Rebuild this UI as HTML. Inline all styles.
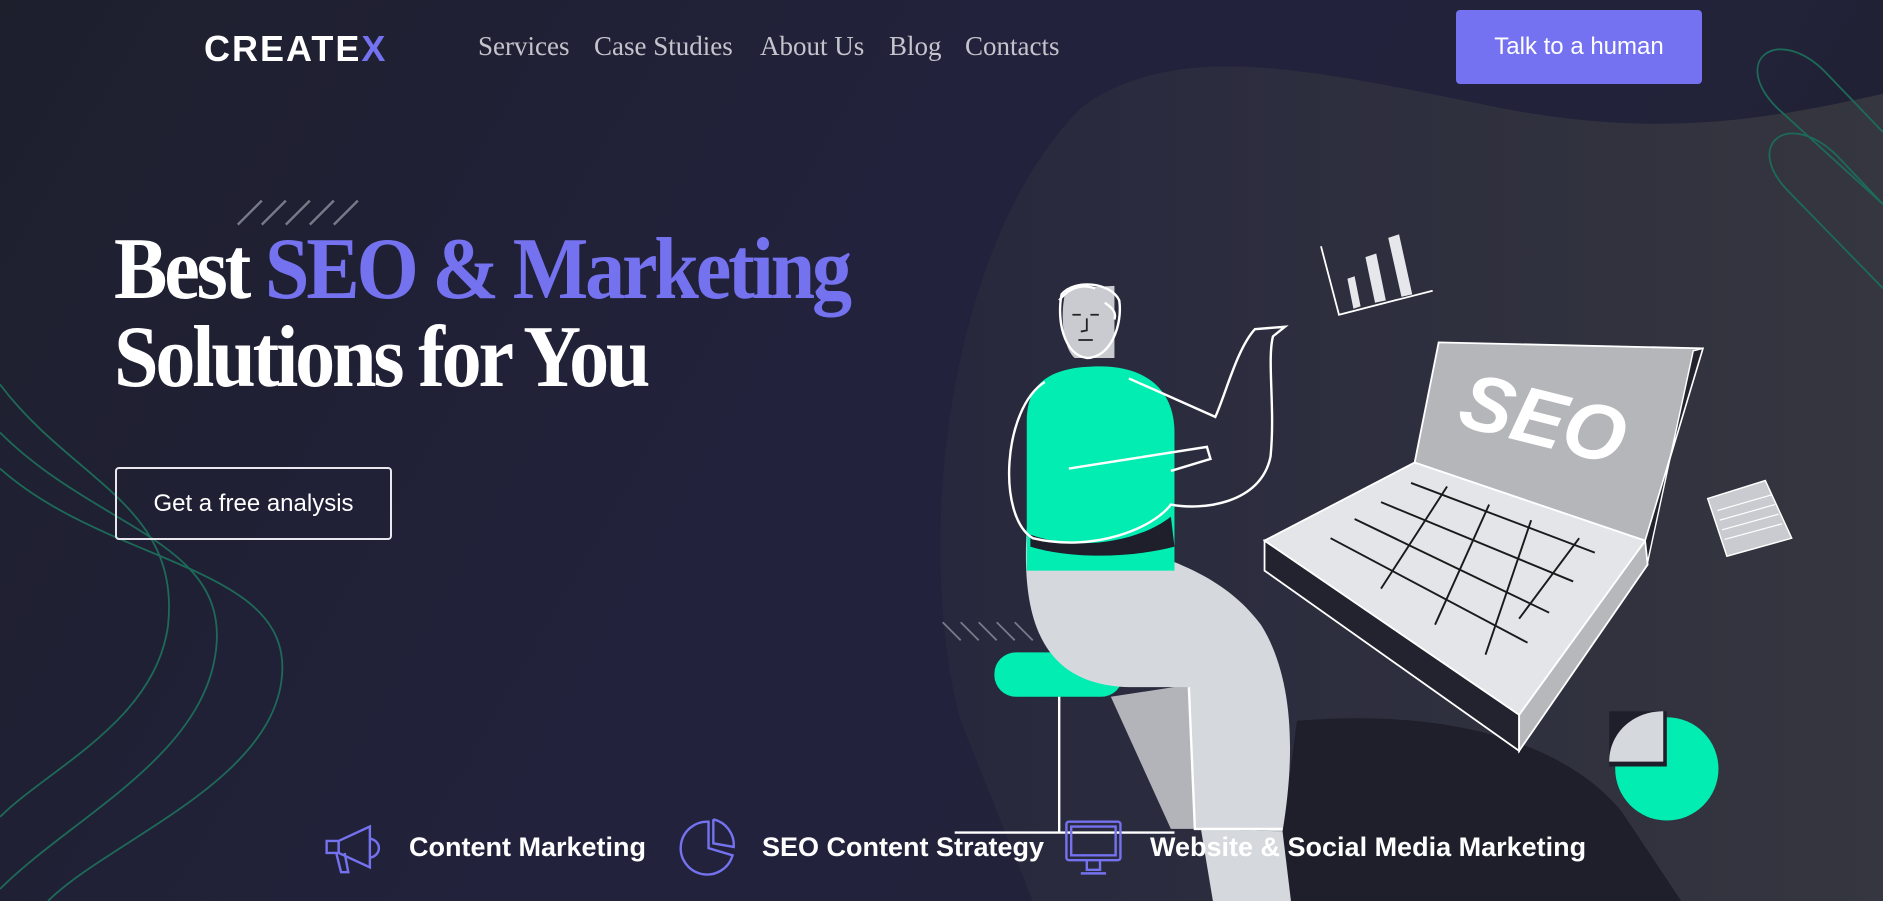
<!DOCTYPE html>
<html><head><meta charset="utf-8"><style>
*{margin:0;padding:0;box-sizing:border-box}
body{width:1883px;height:901px;overflow:hidden;background:linear-gradient(120deg,#1e1f2d 0%,#22223d 45%,#22223a 70%,#1f1f2c 100%);position:relative;font-family:"Liberation Sans",sans-serif}
svg.bg{position:absolute;left:0;top:0}
.abs{position:absolute;white-space:nowrap}
.logo{left:204px;top:28px;font-weight:bold;font-size:36px;color:#fff;letter-spacing:2px}
.nav{top:31px;font-family:"Liberation Serif",serif;font-size:27px;color:#c4c4cc}
.talk{left:1456px;top:10px;width:246px;height:74px;background:#7472f0;border-radius:4px;color:#fff;font-size:24px;display:flex;align-items:center;justify-content:center}
.h{left:114px;font-family:"Liberation Serif",serif;font-weight:bold;font-size:88px;color:#fff;letter-spacing:-3.5px;line-height:1;transform:scaleX(0.91);transform-origin:left top}
.h span{color:#7472ef}
.btn{left:115px;top:467px;width:277px;height:73px;border:2px solid #e8e8ee;border-radius:4px;color:#fff;font-size:24px;display:flex;align-items:center;justify-content:center}
.f{top:832px;font-weight:bold;font-size:27px;color:#fff}
</style></head><body>
<svg class="bg" width="1883" height="901" viewBox="0 0 1568 750" preserveAspectRatio="none">
<defs><linearGradient id="bl" x1="0" y1="0" x2="1" y2="0"><stop offset="0" stop-color="#27283d"/><stop offset="1" stop-color="#35363f"/></linearGradient></defs>
<path d="M800 600 C760 450,790 200,900 90 C980 30,1100 60,1250 90 C1380 115,1470 100,1568 78 L1568 750 L860 750 Z" fill="url(#bl)"/>
<path d="M1080 600 C1200 590,1300 615,1350 675 L1400 750 L1060 750 Z" fill="#1f1f2b"/>
<g fill="none" stroke="#1d6a58" stroke-width="1.5">
<path d="M1568 170 L1480 90 C1440 50,1480 20,1520 60 L1568 110"/>
<path d="M1568 240 L1490 160 C1450 120,1490 90,1530 130 L1568 170"/>
<path d="M0 320 C60 400,150 420,140 520 C130 600,40 640,0 680"/>
<path d="M0 360 C80 440,190 450,180 540 C170 630,60 680,0 740"/>
<path d="M0 390 C90 470,240 470,235 560 C230 650,90 700,40 750"/>
</g>
<g stroke="#777a88" stroke-width="2"><path d="M198 187 L218 167 M218 187 L238 167 M238 187 L258 167 M258 187 L278 167 M278 187 L298 167"/></g>
<g stroke="#777a88" stroke-width="1.5"><path d="M785 518 L800 533 M800 518 L815 533 M815 518 L830 533 M830 518 L845 533 M845 518 L860 533"/></g>
<rect x="828" y="543" width="107" height="37" rx="18" fill="#02edb1"/>
<path d="M882 580 V693 M795 693 H978" stroke="#fff" stroke-width="2"/>
<path d="M925 580 L990 570 L995 690 L975 690 Z" fill="#b2b4b9"/>
<path d="M855 440 C850 520,870 570,940 572 L990 572 L995 690 L1068 692 C1080 620,1075 560,1050 520 C1020 480,980 470,960 460 Z" fill="#d5d8dc"/>
<path d="M1000 690 L1068 692 L1075 750 L1010 750 Z" fill="#d5d8dc"/>
<path d="M990 572 L995 690 H1068" stroke="#fff" fill="none" stroke-width="2"/>
<path d="M855 350 C855 315,880 305,916 305 C955 305,978 325,978 360 V475 H855 Z" fill="#02edb1"/>
<path d="M858 445 C900 460,950 450,975 430 L978 455 C940 465,890 465,858 455 Z" fill="#1e1f2b"/>
<path d="M870 318 C835 340,830 430,860 448 C910 460,960 440,975 420 C1000 425,1050 420,1058 380 C1062 340,1055 300,1060 280 L1070 272 L1045 274 C1030 290,1020 330,1012 347 L940 315" fill="none" stroke="#fff" stroke-width="2"/>
<path d="M890 390 L1005 372 L1008 382 L975 392" fill="none" stroke="#fff" stroke-width="2"/>
<path d="M888 240 L928 238 L928 298 L895 298 C885 290,882 260,888 240 Z" fill="#c9cbd0"/>
<path d="M884 245 C880 265,885 295,905 298 C925 298,935 270,932 250 C925 235,895 232,884 245 Z" fill="none" stroke="#fff" stroke-width="2"/>
<path d="M882 250 C890 240,900 236,912 240 M920 252 C926 256,930 260,928 266" stroke="#fff" stroke-width="2" fill="none"/>
<path d="M893 262 H900 M908 262 H915 M905 265 V275 L900 276 M898 283 H910" stroke="#222" stroke-width="1.5" fill="none"/>
<path d="M1053 450 L1053 475 L1265 625 L1265 595 Z" fill="#22232e" stroke="#fff" stroke-width="1.5"/>
<path d="M1265 595 L1370 450 L1372 470 L1265 625 Z" fill="#b6b8bc" stroke="#fff" stroke-width="1.5"/>
<path d="M1053 450 L1178 385 L1370 450 L1265 595 Z" fill="#e3e5e8" stroke="#fff" stroke-width="1.5"/>
<path d="M1178 385 L1198 285 L1418 290 L1370 450 Z" fill="#b4b6ba" stroke="#fff" stroke-width="1.5"/>
<path d="M1370 450 L1418 290 L1410 292 L1372 468 Z" fill="#22232e" stroke="#fff" stroke-width="1.2"/>
<text x="1215" y="370" transform="rotate(14 1280 350)" font-family="Liberation Sans" font-weight="bold" font-style="italic" font-size="66" fill="#fff">SEO</text>
<g stroke="#1a1a1a" stroke-width="1.6">
<path d="M1175 402 L1328 460 M1150 418 L1310 484 M1128 432 L1290 510 M1108 448 L1272 535"/>
<path d="M1205 405 L1150 490 M1240 420 L1195 520 M1275 433 L1237 545 M1315 448 L1265 515"/>
</g>
<path d="M1100 205 L1115 262 L1193 242" fill="none" stroke="#fff" stroke-width="1.5"/>
<path d="M1122 232 L1128 230 L1133 255 L1127 257 Z M1137 214 L1146 211 L1154 250 L1145 252 Z M1156 198 L1165 195 L1176 245 L1167 247 Z" fill="#e6e7ea"/>
<path d="M1422 415 L1470 400 L1492 448 L1438 463 Z" fill="#c9cbd0" stroke="#fff" stroke-width="1.2"/>
<path d="M1430 425 L1475 412 M1432 433 L1478 420 M1434 441 L1481 428 M1436 449 L1484 436" stroke="#fff"/>
<circle cx="1388" cy="640" r="43" fill="#02edb1"/>
<path d="M1340 592 H1388 V638 H1340 Z" fill="#1e1f2b"/>
<path d="M1340 634 C1340 610,1360 592,1385 592 V634 Z" fill="#d5d8dc"/>
<g fill="none" stroke="#7472ef" stroke-width="2">
<path d="M272 700 H282 L308 688 V722 L282 710 H272 Z M282 700 V710 M308 698 C318 700,318 712,308 714 M280 710 L284 726 H290 L287 710"/>
<path d="M590 684 A22 22 0 1 0 610 712 L590 706 Z M594 682 V702 L611 705 A22 22 0 0 0 594 682"/>
<rect x="888" y="684" width="45" height="32" rx="2"/><path d="M892 688 H929 V712 H892 Z M905 716 V724 H916 V716 M900 727 H921"/>
</g>
</svg>
<div class="abs logo">CREATE<span style="color:#7472ef">X</span></div>
<div class="abs nav" style="left:478px">Services</div>
<div class="abs nav" style="left:594px">Case Studies</div>
<div class="abs nav" style="left:760px">About Us</div>
<div class="abs nav" style="left:889px">Blog</div>
<div class="abs nav" style="left:965px">Contacts</div>
<div class="abs talk">Talk to a human</div>
<div class="abs h" style="top:226px">Best <span>SEO &amp; Marketing</span></div>
<div class="abs h" style="top:314px">Solutions for You</div>
<div class="abs btn">Get a free analysis</div>
<div class="abs f" style="left:409px">Content Marketing</div>
<div class="abs f" style="left:762px">SEO Content Strategy</div>
<div class="abs f" style="left:1150px">Website &amp; Social Media Marketing</div>
</body></html>
